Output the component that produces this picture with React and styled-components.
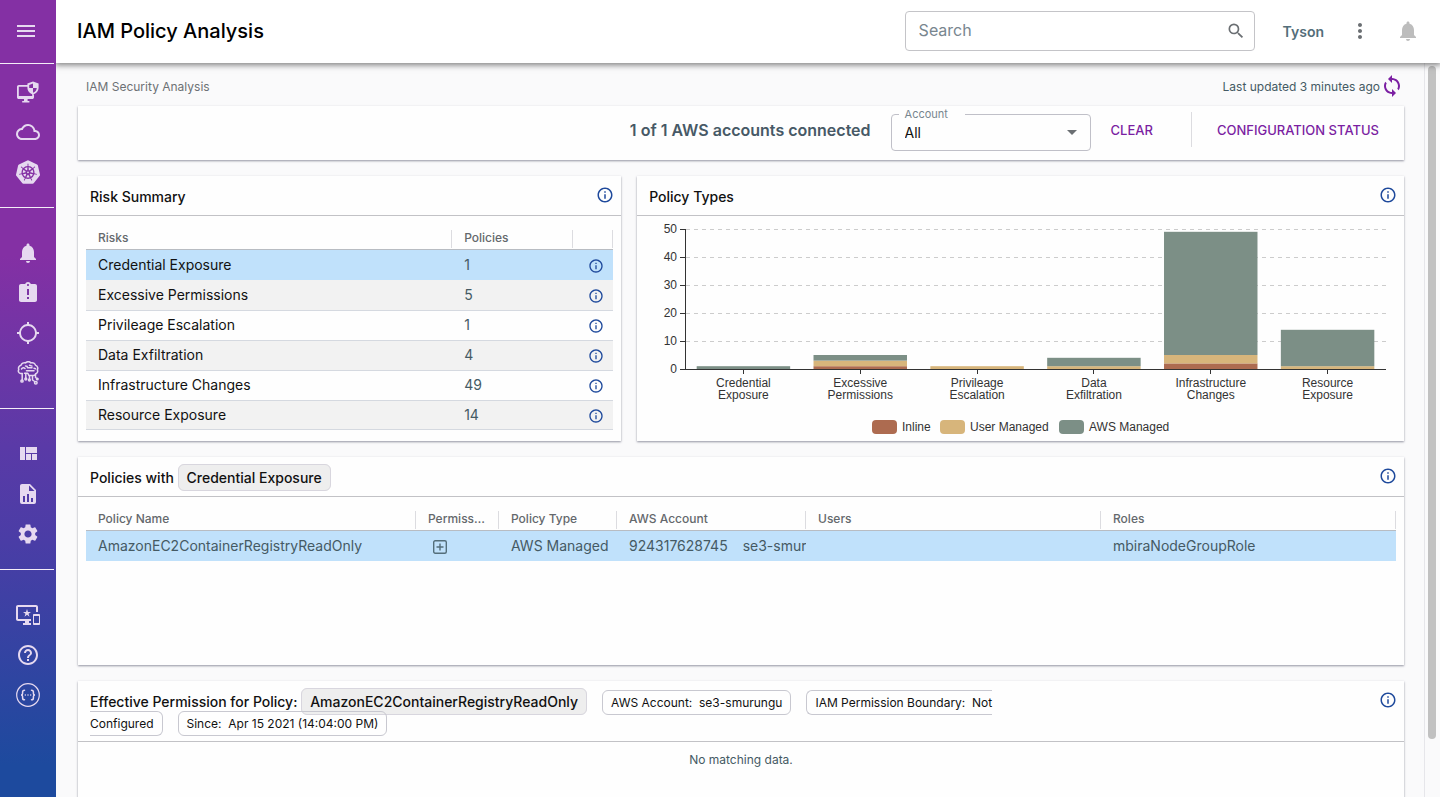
import React, { useState } from "react";
import styled, { createGlobalStyle } from "styled-components";
import {
  MdMenu,
  MdNotifications,
  MdAssignmentLate,
  MdLocationSearching,
  MdSettings,
  MdHelpOutline,
  MdInfoOutline,
  MdSearch,
  MdMoreVert,
  MdSync,
  MdArrowDropDown,
} from "react-icons/md";
import { SiKubernetes } from "react-icons/si";

const risks = [
  { name: "Credential Exposure", policies: 1, inline: 0, user: 0, aws: 1 },
  { name: "Excessive Permissions", policies: 5, inline: 1, user: 2, aws: 2 },
  { name: "Privileage Escalation", policies: 1, inline: 0, user: 1, aws: 0 },
  { name: "Data Exfiltration", policies: 4, inline: 0, user: 1, aws: 3 },
  { name: "Infrastructure Changes", policies: 49, inline: 2, user: 3, aws: 44 },
  { name: "Resource Exposure", policies: 14, inline: 0, user: 1, aws: 13 },
];

const series = [
  { key: "inline", label: "Inline", color: "#ad6b50", x: 235 },
  { key: "user", label: "User Managed", color: "#d7b57b", x: 303 },
  { key: "aws", label: "AWS Managed", color: "#7c8f86", x: 422 },
];

const App = () => {
  const [selected, setSelected] = useState("Credential Exposure");

  return (
    <Page>
      <GlobalStyle />
      <Sidebar />
      <Main>
        <Header>
          <PageTitle>IAM Policy Analysis</PageTitle>
          <SearchBox>
            <SearchInput type="text" placeholder="Search" aria-label="Search" />
            <MdSearch size={20} color="#6b6f73" />
          </SearchBox>
          <UserName>Tyson</UserName>
          <IconButton aria-label="More" $color="#6b6f73">
            <MdMoreVert size={24} />
          </IconButton>
          <IconButton aria-label="Notifications" $color="#bdbdbd">
            <MdNotifications size={24} />
          </IconButton>
        </Header>

        <Body>
          <Content>
            <TopRow>
              <Crumb>IAM Security Analysis</Crumb>
              <Updated>
                Last updated 3 minutes ago
                <IconButton aria-label="Refresh" $color="#7b1fa2">
                  <MdSync size={24} />
                </IconButton>
              </Updated>
            </TopRow>

            <FilterBar>
              <Connected>1 of 1 AWS accounts connected</Connected>
              <Outline>
                <legend>
                  <label htmlFor="account">Account</label>
                </legend>
                <Select id="account">
                  <option>All</option>
                </Select>
                <MdArrowDropDown size={24} color="#6b6f73" />
              </Outline>
              <TextButton>Clear</TextButton>
              <Divider />
              <TextButton>Configuration Status</TextButton>
            </FilterBar>

            <Cards>
              <Card $span={5}>
                <CardHeader>
                  <CardTitle>Risk Summary</CardTitle>
                  <Info size={18} />
                </CardHeader>
                <TableWrap>
                  <Table>
                    <colgroup>
                      <col />
                      <Col $width={121} />
                      <Col $width={40} />
                    </colgroup>
                    <thead>
                      <tr>
                        <HeadCell label="Risks" />
                        <HeadCell label="Policies" />
                        <HeadCell label="" />
                      </tr>
                    </thead>
                    <tbody>
                      {risks.map((risk) => (
                        <Row
                          key={risk.name}
                          $selected={risk.name === selected}
                          onClick={() => setSelected(risk.name)}
                        >
                          <Td $dark>{risk.name}</Td>
                          <Td>{risk.policies}</Td>
                          <Td $icon>
                            <Info size={16} />
                          </Td>
                        </Row>
                      ))}
                    </tbody>
                  </Table>
                </TableWrap>
              </Card>

              <Card $span={7}>
                <CardHeader>
                  <CardTitle>Policy Types</CardTitle>
                  <Info size={18} />
                </CardHeader>
                <PolicyChart />
              </Card>

              <Card $span={12} $minHeight="208px">
                <CardHeader>
                  <CardTitle>
                    Policies with <Chip>{selected}</Chip>
                  </CardTitle>
                  <Info size={18} />
                </CardHeader>
                <TableWrap>
                  <Table>
                    <colgroup>
                      <Col $width={330} />
                      <Col $width={83} />
                      <Col $width={118} />
                      <Col $width={189} />
                      <col />
                      <col />
                    </colgroup>
                    <thead>
                      <tr>
                        <HeadCell label="Policy Name" />
                        <HeadCell label="Permissions" />
                        <HeadCell label="Policy Type" />
                        <HeadCell label="AWS Account" />
                        <HeadCell label="Users" />
                        <HeadCell label="Roles" />
                      </tr>
                    </thead>
                    <tbody>
                      <Row $selected>
                        <Td>AmazonEC2ContainerRegistryReadOnly</Td>
                        <Td>
                          <ExpandButton aria-label="Show permissions" $color="#546e7a">
                            <PlusBoxIcon />
                          </ExpandButton>
                        </Td>
                        <Td>AWS Managed</Td>
                        <Td>
                          <AccountId>924317628745</AccountId>se3-smurungu
                        </Td>
                        <Td />
                        <Td>mbiraNodeGroupRole</Td>
                      </Row>
                    </tbody>
                  </Table>
                </TableWrap>
              </Card>

              <Card $span={12} $minHeight="180px">
                <CardHeader>
                  <CardTitle $wrap>
                    Effective Permission for Policy:{" "}
                    <Chip>AmazonEC2ContainerRegistryReadOnly</Chip>
                    <Tag>AWS Account:&nbsp; se3-smurungu</Tag>
                    <Tag>IAM Permission Boundary:&nbsp; Not Configured</Tag>
                    <Tag>Since:&nbsp; Apr 15 2021 (14:04:00 PM)</Tag>
                  </CardTitle>
                  <Info size={18} />
                </CardHeader>
                <Empty>No matching data.</Empty>
              </Card>
            </Cards>
          </Content>
          <ScrollRail>
            <ScrollThumb />
          </ScrollRail>
        </Body>
      </Main>
    </Page>
  );
};

export default App;

const Sidebar = () => (
  <Nav>
    <NavTop>
      <NavButton aria-label="Menu">
        <MdMenu size={24} />
      </NavButton>
    </NavTop>
    <NavGroup $first>
      <NavButton aria-label="Workloads">
        <ShieldMonitorIcon />
      </NavButton>
      <NavButton aria-label="Cloud">
        <CloudIcon />
      </NavButton>
      <NavButton aria-label="Kubernetes">
        <SiKubernetes size={24} />
      </NavButton>
    </NavGroup>
    <NavGroup>
      <NavButton aria-label="Alerts">
        <MdNotifications size={24} />
      </NavButton>
      <NavButton aria-label="Incidents">
        <MdAssignmentLate size={24} />
      </NavButton>
      <NavButton aria-label="Targets">
        <MdLocationSearching size={24} />
      </NavButton>
      <NavButton aria-label="Intelligence">
        <BrainIcon />
      </NavButton>
    </NavGroup>
    <NavGroup>
      <NavButton aria-label="Dashboards">
        <QuiltIcon />
      </NavButton>
      <NavButton aria-label="Reports">
        <FileChartIcon />
      </NavButton>
      <NavButton aria-label="Settings">
        <MdSettings size={24} />
      </NavButton>
    </NavGroup>
    <NavGroup $last>
      <NavButton aria-label="Devices">
        <DevicesIcon />
      </NavButton>
      <NavButton aria-label="Help">
        <MdHelpOutline size={24} />
      </NavButton>
      <NavButton aria-label="API">
        <BracesIcon />
      </NavButton>
    </NavGroup>
  </Nav>
);

const HeadCell = ({ label }) => (
  <Th>
    <ThLabel>{label}</ThLabel>
  </Th>
);

const Info = ({ size }) => (
  <IconButton aria-label="Info" $color="#1f4a9c">
    <MdInfoOutline size={size} />
  </IconButton>
);

// Plot area: x 48..749, baseline at 153, 2.8px per policy
const PolicyChart = () => {
  const left = 48;
  const base = 153;
  const band = 701 / 6;
  const unit = 2.8;

  return (
    <Chart viewBox="0 0 766 225" preserveAspectRatio="xMinYMin meet">
      {[0, 10, 20, 30, 40, 50].map((n) => {
        const y = base - n * unit + 0.5;
        return (
          <g key={n}>
            {n > 0 && (
              <line x1={left + 1} x2="749" y1={y} y2={y} stroke="#ccc" strokeDasharray="4 4" />
            )}
            <line x1="43" x2={left} y1={y} y2={y} stroke="#333" />
            <text x="40" y={Math.floor(y) + 4} textAnchor="end">
              {n}
            </text>
          </g>
        );
      })}
      {risks.map((risk, i) => {
        const x = left + band * (i + 0.1);
        const mid = left + band * (i + 0.5);
        const tick = Math.floor(mid) + 0.5;
        const [first, second] = risk.name.split(" ");
        let top = base;
        return (
          <g key={risk.name}>
            {series.map((s) => {
              const h = risk[s.key] * unit;
              top -= h;
              return (
                <rect key={s.key} x={x} y={top} width={band * 0.8} height={h} fill={s.color} />
              );
            })}
            <line x1={tick} x2={tick} y1={base} y2={base + 5} stroke="#333" />
            <text x={mid} y="171" textAnchor="middle">
              {first}
            </text>
            <text x={mid} y="183" textAnchor="middle">
              {second}
            </text>
          </g>
        );
      })}
      <line x1="48.5" x2="48.5" y1="13" y2="154" stroke="#333" />
      <line x1="48" x2="749" y1="153.5" y2="153.5" stroke="#333" />
      {series.map((s) => (
        <g key={s.key}>
          <rect x={s.x} y="204" width="25" height="14" rx="4" fill={s.color} />
          <text x={s.x + 30} y="215">
            {s.label}
          </text>
        </g>
      ))}
    </Chart>
  );
};

const ShieldMonitorIcon = () => (
  <svg width="24" height="24" viewBox="0 -1 24 24" fill="currentColor">
    <path d="M12 4H2.800C1.800 4 1 4.800 1 5.800v10.400C1 17.200 1.800 18 2.800 18H8v2H6.200v1.600h7.200V20H11.600v-2h4.600c1 0 1.800-.8 1.800-1.800V13.500l-1.800-.8V15H2.800V5.800H12z" />
    <path
      fillRule="evenodd"
      d="M17 .6 11.400 2.600v4c0 3.400 2.300 6 5.600 7 3.300-1 5.600-3.600 5.600-7v-4zM17 2.600v4.300h-3.800V4zM17 6.900h3.800c-.2 2.300-1.600 4-3.800 4.900z"
    />
  </svg>
);

const CloudIcon = () => (
  <svg width="24" height="24" viewBox="0 0 24 24" fill="currentColor">
    <path d="M19.350 10.040A7.490 7.490 0 0 0 12 4C9.110 4 6.600 5.640 5.350 8.040A5.994 5.994 0 0 0 0 14c0 3.310 2.690 6 6 6h13c2.760 0 5-2.240 5-5 0-2.640-2.050-4.780-4.650-4.960zM19 18H6c-2.210 0-4-1.790-4-4s1.790-4 4-4h.71C7.370 7.690 9.480 6 12 6c3.040 0 5.500 2.460 5.500 5.500v.5H19c1.660 0 3 1.340 3 3s-1.340 3-3 3z" />
  </svg>
);

const BrainIcon = () => (
  <svg
    width="24"
    height="24"
    viewBox="0 0 24 24"
    fill="none"
    stroke="currentColor"
    strokeWidth="1.500"
    strokeLinecap="round"
    strokeLinejoin="round"
  >
    <path d="M6 12.500H4.500A2.600 2.600 0 0 1 2.800 8.500 3 3 0 0 1 5 4.300 3.600 3.600 0 0 1 9.500 1.900a4 4 0 0 1 5.500 0 3.600 3.600 0 0 1 4.600 2.500A3 3 0 0 1 21.300 8.900a2.500 2.500 0 0 1-1.300 3.700 3 3 0 0 1-3 2H13l-1.200-2.300H8.500" />
    <path d="M5.500 8c1-1.500 2.500-1.500 3.500-.5M9.500 5c1 0 2 .5 2 1.700h4.500M10.500 9.700h7.500M13.500 4.300l2.500.8M18 7.300l1.500.4" />
    <path d="M6.200 12.500v6.300M9.800 12.500v4.500M13.500 15v2.800M16.500 15v4l2.200 1.500M19.500 13v3.500l1.200.8" />
    <circle cx="6" cy="20" r="1.100" />
    <circle cx="9.800" cy="18" r="0.900" />
    <circle cx="13.400" cy="19" r="0.900" />
    <circle cx="19.800" cy="21.800" r="1.300" />
    <circle cx="21.300" cy="18" r="0.800" />
  </svg>
);

const QuiltIcon = () => (
  <svg width="24" height="24" viewBox="0 0 24 24" fill="currentColor">
    <path d="M10 18h5v-6h-5v6zm-6 0h5V5H4v13zm12 0h5v-6h-5v6zM10 5v6h11V5H10z" />
  </svg>
);

const FileChartIcon = () => (
  <svg width="24" height="24" viewBox="0 0 24 24" fill="currentColor">
    <path d="M13 9h5.500L13 3.500V9M6 2h8l6 6v12a2 2 0 0 1-2 2H6a2 2 0 0 1-2-2V4c0-1.110.89-2 2-2m1 18h2v-6H7v6m4 0h2v-8h-2v8m4 0h2v-4h-2v4z" />
  </svg>
);

const DevicesIcon = () => (
  <svg width="24" height="24" viewBox="0 0 24 24" fill="currentColor">
    <path d="M23 11.010L18 11c-.55 0-1 .45-1 1v9c0 .55.45 1 1 1h5c.55 0 1-.45 1-1v-9c0-.55-.45-.99-1-.99zM23 20h-5v-7h5v7zM20 2H2C.89 2 0 2.890 0 4v12c0 1.100.89 2 2 2h7v2H7v2h8v-2h-2v-2h2v-2H2V4h18v5h2V4c0-1.110-.9-2-2-2zm-8.030 7L11 6l-.97 3H7l2.470 1.760-.94 2.910 2.470-1.800 2.470 1.800-.94-2.910L15 9h-3.030z" />
  </svg>
);

const BracesIcon = () => (
  <svg
    width="24"
    height="24"
    viewBox="0 0 24 24"
    fill="none"
    stroke="currentColor"
    strokeWidth="1.500"
    strokeLinecap="round"
  >
    <circle cx="12" cy="12" r="11.300" strokeWidth="1.200" />
    <path d="M8.500 7.200c-1.700 0-1.900.7-1.900 1.900v1.300c0 .9-.4 1.500-1.500 1.600 1.100.1 1.500.7 1.500 1.600v1.300c0 1.200.2 1.900 1.900 1.900" />
    <path d="M15.500 7.200c1.700 0 1.900.7 1.900 1.900v1.300c0 .9.400 1.500 1.500 1.600-1.100.1-1.500.7-1.500 1.600v1.300c0 1.200-.2 1.900-1.900 1.900" />
    <path d="M9.300 12h.01M12 12h.01M14.700 12h.01" />
  </svg>
);

const PlusBoxIcon = () => (
  <svg width="14" height="14" viewBox="0 0 14 14" fill="none" stroke="currentColor" strokeWidth="1.400">
    <rect x="0.700" y="0.700" width="12.600" height="12.600" rx="1.500" />
    <path d="M7 3.500v7M3.500 7h7" />
  </svg>
);

const GlobalStyle = createGlobalStyle`
  * {
    box-sizing: border-box;
  }
  body {
    margin: 0;
    font-family: "Inter", "Liberation Sans", sans-serif;
    color: #111;
    background-color: #fafafb;
  }
  button, input, select {
    font-family: inherit;
  }
`;

const Page = styled.div`
  display: flex;
  height: 100vh;
  overflow: hidden;
`;

const Nav = styled.nav`
  flex: 0 0 56px;
  background: linear-gradient(180deg, #8430a4 0%, #8430a4 32%, #5a3aa7 56%, #4a3da6 68%, #1d4a9e 96%);
`;

const NavTop = styled.div`
  display: flex;
  align-items: center;
  justify-content: center;
  height: 64px;
  margin-right: 2px;
  padding: 0 2px 1px 0;
  border-bottom: 1px solid #f4eef8;
`;

const NavGroup = styled.div`
  display: flex;
  flex-direction: column;
  align-items: center;
  margin-right: 2px;
  padding: ${(props) => (props.$first ? "8px" : "25px")} 0 15px 2px;
  border-bottom: ${(props) => (props.$last ? "none" : "1px solid #f4eef8")};
`;

const NavButton = styled.button`
  display: flex;
  align-items: center;
  justify-content: center;
  width: 40px;
  height: 40px;
  padding: 0;
  border: none;
  background: none;
  color: #e6d9f0;
  cursor: pointer;
`;

const Main = styled.main`
  flex: 1;
  min-width: 0;
  display: flex;
  flex-direction: column;
`;

const Header = styled.header`
  display: flex;
  align-items: center;
  flex-shrink: 0;
  gap: 24px;
  height: 63px;
  padding: 0 20px 1px 21px;
  background-color: #fff;
  box-shadow: 0 1px 6px 1px rgba(0, 0, 0, 0.5);
  clip-path: inset(0 0 -12px 0);
  z-index: 1;
`;

const PageTitle = styled.h1`
  flex: 1;
  margin: 0;
  font-size: 20px;
  font-weight: 500;
  color: #000;
`;

const SearchBox = styled.div`
  display: flex;
  align-items: center;
  width: 350px;
  height: 40px;
  padding: 0 8px 0 13px;
  border: 1px solid #c4c4c8;
  border-radius: 4px;
`;

const SearchInput = styled.input`
  flex: 1;
  min-width: 0;
  padding: 0 0 2px;
  border: none;
  outline: none;
  font-size: 16px;
  background: none;

  &::placeholder {
    color: #78868f;
    opacity: 1;
  }
`;

const UserName = styled.span`
  padding-left: 4px;
  font-size: 14px;
  font-weight: 600;
  color: #546e7a;
`;

const IconButton = styled.button`
  display: inline-flex;
  align-items: center;
  justify-content: center;
  padding: 0;
  border: none;
  background: none;
  color: ${(props) => props.$color};
  cursor: pointer;
`;

const ExpandButton = styled(IconButton)`
  padding-left: 5px;
`;

const Body = styled.div`
  flex: 1;
  min-height: 0;
  display: flex;
`;

const Content = styled.div`
  flex: 1;
  min-width: 0;
  overflow: hidden;
  padding: 0 20px 0 22px;
`;

const TopRow = styled.div`
  display: flex;
  align-items: center;
  justify-content: space-between;
  height: 43px;
  padding: 3px 0 0 8px;
  font-size: 12px;
`;

const Crumb = styled.span`
  color: #6d7175;
`;

const Updated = styled.span`
  display: flex;
  align-items: center;
  color: #455a64;
`;

const FilterBar = styled.section`
  display: flex;
  align-items: center;
  justify-content: flex-end;
  height: 54px;
  padding: 2px 25px 9px;
  background-color: #fefefe;
  box-shadow: 0 1px 2px rgba(60, 64, 90, 0.55);
`;

const Connected = styled.span`
  font-size: 16px;
  font-weight: 600;
  color: #475966;
`;

const Outline = styled.fieldset`
  display: flex;
  align-items: center;
  width: 200px;
  height: 43px;
  margin: 0 20px;
  padding: 0 6px 6px 7px;
  border: 1px solid #c0c0c8;
  border-radius: 4px;

  legend {
    display: block;
    width: 66px;
    padding: 0 6px;
    font-size: 11px;
    line-height: 12px;
    color: #78868f;
  }
`;

const Select = styled.select`
  flex: 1;
  height: 24px;
  padding: 0 6px;
  border: none;
  outline: none;
  appearance: none;
  background: none;
  font-size: 14px;
  color: #111;
`;

const TextButton = styled.button`
  padding: 0;
  border: none;
  background: none;
  font-size: 13px;
  font-weight: 500;
  text-transform: uppercase;
  color: #7b1fa2;
  cursor: pointer;
`;

const Divider = styled.div`
  width: 1px;
  height: 35px;
  margin: 0 25px 0 38px;
  background-color: #dcdce0;
`;

const Cards = styled.div`
  display: grid;
  grid-template-columns: repeat(12, minmax(0, 1fr));
  gap: 16px;
  padding-top: 16px;
`;

const Card = styled.section`
  grid-column: span ${(props) => props.$span};
  min-height: ${(props) => props.$minHeight || "265px"};
  background-color: #fefefe;
  box-shadow: 0 1px 2px rgba(60, 64, 90, 0.55);
`;

const CardHeader = styled.div`
  display: flex;
  align-items: flex-start;
  justify-content: space-between;
  padding: 10px 7px 8px 12px;
  border-bottom: 1px solid #c2c2c6;
`;

const CardTitle = styled.h2`
  max-width: ${(props) => (props.$wrap ? "70%" : "none")};
  margin: 0;
  font-size: 14px;
  font-weight: 500;
  line-height: 21px;
`;

const Chip = styled.span`
  padding: 4px 8px;
  border: 1px solid #d8d6de;
  border-radius: 6px;
  background-color: #eee;
`;

const Tag = styled.span`
  margin-left: 15px;
  padding: 4px 8px;
  border: 1px solid #c8c8d0;
  border-radius: 6px;
  font-size: 12px;
  font-weight: 400;
  line-height: 1;
`;

const TableWrap = styled.div`
  padding: 0 8px;
`;

const Table = styled.table`
  width: 100%;
  table-layout: fixed;
  border-collapse: separate;
  border-spacing: 0;
`;

const Col = styled.col`
  width: ${(props) => props.$width}px;
`;

const Th = styled.th`
  height: 34px;
  padding: 14px 0 1px;
  border-bottom: 1px solid #b8bcc2;
  text-align: left;
  vertical-align: top;
`;

const ThLabel = styled.div`
  height: 18px;
  padding: 0 12px;
  overflow: hidden;
  text-overflow: ellipsis;
  white-space: nowrap;
  border-right: 1px solid #dcdce0;
  font-size: 12px;
  font-weight: 500;
  line-height: 15px;
  color: #64686c;
`;

const Td = styled.td`
  height: 30px;
  padding: ${(props) => (props.$icon ? "0 9px 1px 0" : "0 0 2px 12px")};
  overflow: hidden;
  white-space: nowrap;
  text-align: ${(props) => (props.$icon ? "right" : "left")};
  font-size: 14px;
  color: ${(props) => (props.$dark ? "#111" : "#455a64")};

  button {
    vertical-align: middle;
  }
`;

const Row = styled.tr`
  background-color: ${(props) => (props.$selected ? "#c0e1fb" : "#fefefe")};
  cursor: pointer;

  &:nth-child(even) {
    background-color: ${(props) => (props.$selected ? "#c0e1fb" : "#f2f2f2")};
  }
  & + & td {
    border-top: 1px solid #d5d9e0;
  }
  & + &:last-child td {
    border-bottom: 1px solid #d5d9e0;
  }
`;

const AccountId = styled.span`
  margin-right: 15px;
`;

const Chart = styled.svg`
  display: block;
  width: 100%;
  height: 225px;
  font-family: "Liberation Sans", Arial, sans-serif;
  font-size: 12px;
  fill: #333;
`;

const Empty = styled.p`
  margin: 0;
  padding-top: 10px;
  font-size: 12px;
  text-align: center;
  color: #455a64;
`;

const ScrollRail = styled.div`
  flex: 0 0 16px;
  padding: 3px 4px 0 3px;
  border-left: 1px solid #e6e6ea;
`;

const ScrollThumb = styled.div`
  height: 92%;
  border-radius: 4px;
  background-color: #c1c1c1;
`;
